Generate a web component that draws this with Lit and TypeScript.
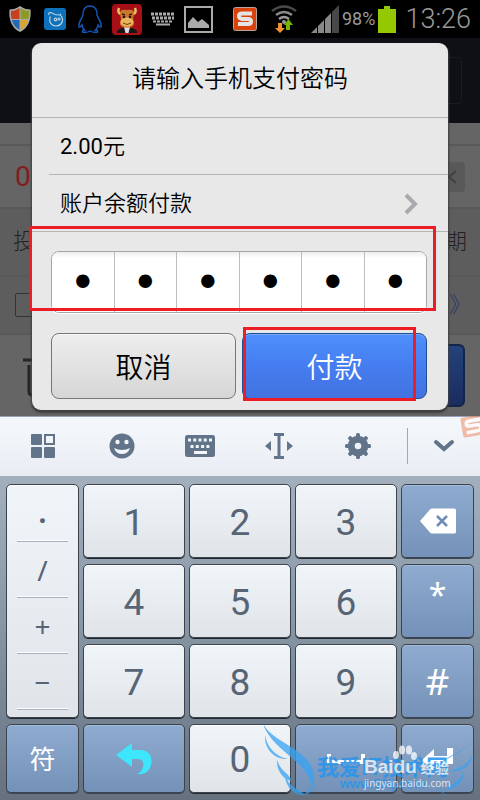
import { LitElement, html, css, svg } from "lit";
import { customElement } from "lit/decorators.js";
import { classMap } from "lit/directives/class-map.js";

@customElement("status-bar")
class StatusBar extends LitElement {
  static styles = css`
    :host {
      display: flex;
      justify-content: space-between;
      align-items: center;
      height: 38px;
      padding: 0 9px 0 7px;
      background: #000;
      color: #9a9a9a;
      font-family: Roboto, "Noto Sans", sans-serif;
    }
    .group { display: flex; align-items: center; gap: 9px; }
    .spread { gap: 14px; }
    .power { display: flex; align-items: center; gap: 3px; }
    .percent { font-size: 18px; line-height: 24px; }
    .time { font-size: 27px; line-height: 32px; font-weight: 300; }
    svg { display: block; }
  `;
  render() {
    return html`
      <div class="group">
        <svg width="26" height="28" viewBox="0 0 26 28">
          <path d="M13 1C10 3.500 6 4.500 2.500 4.500C1.500 13 4 23 13 27C22 23 24.500 13 23.500 4.500C20 4.500 16 3.500 13 1Z" fill="#aaa"/>
          <path d="M12.500 3C10 5 7 6 4 6Q3.500 10 4.500 14H12.500Z" fill="#c6401f"/>
          <path d="M13.500 3C16 5 19 6 22 6Q22.500 10 21.500 14H13.500Z" fill="#8c9b25"/>
          <path d="M4.800 15H12.500V25Q6.500 21.500 4.800 15Z" fill="#2467b5"/>
          <path d="M21.200 15H13.500V25Q19.500 21.500 21.200 15Z" fill="#dca52a"/>
        </svg>
        <svg width="26" height="26" viewBox="0 0 26 26">
          <rect x="2" y="2" width="22" height="22" rx="3" fill="#0d72bb"/>
          <g fill="none" stroke="#b8cfdf" stroke-width="1.200">
            <path d="M7 9C6 6 9 6 12 8Q16 10 19 8"/>
            <path d="M8.500 10.500C6 16 10 20 14 20C18 20 21 17 20.500 13Q20 10 18 9"/>
            <circle cx="13.500" cy="13.500" r="1.300"/><circle cx="17" cy="13" r="1"/>
          </g>
        </svg>
        <svg width="26" height="30" viewBox="0 0 26 30">
          <path d="M13 2C8 2 5.500 6 6 11C5.500 14 1 18 2 23C3 23.500 4 22 5 21Q5 24 7.500 26Q5 26 5.500 28Q10 29 13 27Q16 29 20.500 28Q21 26 18.500 26Q21 24 21 21C22 22 23 23.500 24 23C25 18 20.500 14 20 11C20.500 6 18 2 13 2Z" fill="#000" stroke="#1458b8" stroke-width="1.500"/>
        </svg>
        <svg width="30" height="31" viewBox="0 0 30 31">
          <rect width="30" height="31" rx="4" fill="#a70f17"/>
          <path d="M5 29V27Q9 23 15 24Q21 23 25 27V29Z" fill="#171717"/>
          <path d="M12 23H18L16.500 29H13.500Z" fill="#ddd"/>
          <path d="M7 4Q5 9 9 10M23 4Q25 9 21 10" stroke="#e6c267" stroke-width="2.500" fill="none"/>
          <path d="M8 9Q8 5 15 6Q22 5 22 9L21 16Q24 21 19 23Q15 24 11 23Q6 21 9 16Z" fill="#c9772c"/>
          <ellipse cx="15" cy="18" rx="6.500" ry="4.500" fill="#e8b55a"/>
          <path d="M11 19Q15 22 19 19" stroke="#7a3510" fill="none"/>
          <path d="M10 10L13 11M20 10L17 11" stroke="#401708" stroke-width="1.500"/>
          <circle cx="12" cy="13" r="1.300" fill="#211"/><circle cx="18" cy="13" r="1.300" fill="#211"/>
        </svg>
        <svg width="24" height="14" viewBox="0 0 24 14" stroke="#aaa" fill="none">
          <path d="M0 2H24" stroke-width="3" stroke-dasharray="3 1"/>
          <path d="M1 6H23" stroke-width="3" stroke-dasharray="3 1"/>
          <path d="M2 9.500H22" stroke-width="2" stroke-dasharray="3 1"/>
          <path d="M5 12.500H19" stroke-width="2"/>
        </svg>
        <svg width="29" height="27" viewBox="0 0 29 27">
          <rect x="1" y="1" width="27" height="25" fill="none" stroke="#aaa" stroke-width="2"/>
          <path d="M4 22V17L9 11L14 16L18 13L25 19V22Z" fill="#aaa"/>
        </svg>
      </div>
      <div class="group">
        <div class="power">
          <div class="group spread">
            <svg width="24" height="24" viewBox="0 0 24 24">
              <rect x=".5" y=".5" width="23" height="23" rx="2" fill="#d9420b" stroke="#b9a59a"/>
              <path d="M19 6.500H9Q6 6.500 6 9T9 12H15Q18 12 18 14.500T15 17H5" fill="none" stroke="#e4e4e4" stroke-width="4"/>
            </svg>
            <svg width="26" height="28" viewBox="0 0 26 28">
              <g fill="none" stroke-width="2.500">
                <path d="M1 6Q13 -3 25 6" stroke="#4a4a4a"/>
                <path d="M5 10Q13 4 21 10" stroke="#888"/>
                <path d="M8 14Q13 10 18 14" stroke="#999"/>
              </g>
              <circle cx="13" cy="17" r="2" fill="#999"/>
              <path d="M7 18H11V23H14L9 28L4 23H7Z" fill="#ef922c"/>
              <path d="M15 25H19V20H22L17.500 14L13 20H15Z" fill="#78b400"/>
            </svg>
            <svg width="28" height="28" viewBox="0 0 28 28">
              <path d="M0 28L6 22V28ZM7 21L13 15V28H7ZM14 14L20 8V28H14Z" fill="#888"/>
              <path d="M21 7L28 0V28H21Z" fill="#484848"/>
            </svg>
          </div>
          <span class="percent">98%</span>
          <svg width="18" height="27" viewBox="0 0 18 27"><path d="M6 0H12V3H18V27H0V3H6Z" fill="#94c800"/></svg>
        </div>
        <span class="time">13:26</span>
      </div>
    `;
  }
}

@customElement("order-page")
class OrderPage extends LitElement {
  static styles = css`
    :host {
      display: flex;
      flex-direction: column;
      min-width: 0;
      background: #656565;
      color: #222;
      font: 300 22px/32px Roboto, "Noto Sans CJK SC", sans-serif;
    }
    .row {
      display: flex;
      justify-content: space-between;
      align-items: center;
      box-sizing: border-box;
      padding: 0 13px;
      border-bottom: 2px solid #595959;
    }
    .head { height: 85px; background: #0f1015; border: 0; padding: 0 18px; }
    .head-button { margin-left: auto; width: 80px; height: 47px; border: 1px solid #1b1c22; border-radius: 4px; background: none; }
    .strip { height: 23px; }
    .amount { height: 63px; font-size: 28px; color: #801d1d; font-weight: 400; padding: 0 15px; }
    .times { height: 68px; background: #5d5d5d; }
    .agree { height: 58px; background: #5d5d5d; padding: 0 15px; }
    .foot { flex: 1; border: 0; padding: 0 15px 0 23px; }
    .clear { display: flex; align-items: center; justify-content: flex-end; width: 60px; height: 30px; padding: 0 7px; border: 0; border-radius: 4px; background: #595959; }
    .tick { appearance: none; width: 24px; height: 24px; margin: 0; border: 1px solid #333; border-radius: 2px; }
    .terms { color: #1f3864; text-decoration: none; margin-right: -6px; }
    .buy { width: 120px; height: 63px; border: 2px solid #122647; border-radius: 6px; background: linear-gradient(#24427a, #1b2c60); }
  `;
  render() {
    return html`
      <div class="row head"><button class="head-button" aria-label="菜单"></button></div>
      <div class="row strip"></div>
      <div class="row amount">
        <span>0</span>
        <button class="clear" aria-label="删除">
          <svg width="12" height="14" viewBox="0 0 12 14"><path d="M10 1L3 7L10 13" fill="none" stroke="#404040" stroke-width="2"/></svg>
        </button>
      </div>
      <div class="row times"><span>投</span><span>期</span></div>
      <div class="row agree">
        <input class="tick" type="checkbox" aria-label="同意" />
        <a class="terms" href="#">》</a>
      </div>
      <div class="row foot">
        <svg width="40" height="42" viewBox="0 0 40 42" fill="none" stroke="#252525" stroke-width="3">
          <path d="M0 5H40M6 10V37Q6 40 10 40H30Q34 40 34 36V10M14 4V1H26V4"/>
        </svg>
        <button class="buy" aria-label="购买"></button>
      </div>
    `;
  }
}

@customElement("pay-dialog")
class PayDialog extends LitElement {
  static styles = css`
    :host {
      position: relative;
      display: block;
      background: #e8e8e8;
      border-radius: 9px;
      box-shadow: 0 2px 2px 1px #404040;
      color: #000;
      font: 350 22px/32px Roboto, "Noto Sans CJK SC", sans-serif;
    }
    .title {
      margin: 0;
      box-sizing: border-box;
      height: 75px;
      padding: 20px 0 0;
      border-bottom: 1px solid #b5b5b5;
      font-size: 24px;
      font-weight: inherit;
      text-align: center;
    }
    .row {
      display: flex;
      align-items: center;
      justify-content: space-between;
      box-sizing: border-box;
      height: 57px;
      margin-left: 17px;
      padding: 2px 30px 0 11px;
      border-bottom: 1px solid #b5b5b5;
    }
    .price { font-weight: 400; }
    .last { margin-left: 0; padding-left: 28px; }
    .form { padding: 19px 21px 11px 19px; }
    .pin {
      display: flex;
      box-sizing: border-box;
      height: 62px;
      margin: 0 0 20px;
      padding: 0;
      border: 1px solid #a5a5a5;
      border-radius: 8px;
      overflow: hidden;
      background: #fff;
      box-shadow: 0 1px 0 #fff;
    }
    .digit {
      flex: 1;
      min-width: 0;
      width: 0;
      padding: 2px 0 0;
      border: 0;
      border-radius: 0;
      outline: 0;
      background: linear-gradient(#eee, #fff 6px);
      color: #000;
      font: 46px/58px "DejaVu Sans", sans-serif;
      text-align: center;
    }
    .digit + .digit { border-left: 1px solid #bdbdbd; }
    .actions { display: flex; gap: 6px; }
    .action {
      flex: 1;
      height: 66px;
      padding: 6px 0 0;
      border: 1px solid #777;
      border-radius: 8px;
      background: linear-gradient(#ededed, #e2e2e2 50%, #d6d6d6);
      box-shadow: inset 0 1px 0 #f8f8f8;
      color: #000;
      font: inherit;
      font-size: 28px;
    }
    .primary {
      border-color: #1a4f94;
      background: linear-gradient(#4f8ffc, #457df0 50%, #4272e0);
      box-shadow: inset 0 1px 0 #78aaff;
      color: #fff;
    }
    .mark { position: absolute; box-sizing: border-box; border: 3px solid #ee1c24; pointer-events: none; }
    .mark-pin { left: -3px; right: 12px; top: 183px; height: 85px; }
    .mark-pay { left: calc(50% + 3px); right: 32px; top: 284px; height: 74px; }
  `;
  render() {
    return html`
      <h1 class="title">请输入手机支付密码</h1>
      <div class="row"><span><span class="price">2.00</span>元</span></div>
      <div class="row last">
        <span>账户余额付款</span>
        <svg width="14" height="22" viewBox="0 0 14 22"><path d="M2 2L11 11L2 20" fill="none" stroke="#aaaaae" stroke-width="4"/></svg>
      </div>
      <form class="form" @submit=${(e: Event) => e.preventDefault()}>
        <div class="pin" role="group" aria-label="支付密码">
          ${[1, 2, 3, 4, 5, 6].map((n) => html`<input class="digit" type="password" maxlength="1" value="0" aria-label="第${n}位" />`)}
        </div>
        <div class="actions">
          <button class="action" type="button">取消</button>
          <button class="action primary" type="submit">付款</button>
        </div>
      </form>
      <div class="mark mark-pin"></div>
      <div class="mark mark-pay"></div>
    `;
  }
}

const gearTeeth = [0, 45, 90, 135, 180, 225, 270, 315];

@customElement("soft-keyboard")
class SoftKeyboard extends LitElement {
  static styles = css`
    :host {
      position: relative;
      display: flex;
      flex-direction: column;
      overflow: hidden;
      font-family: Roboto, "Noto Sans CJK SC", sans-serif;
    }
    button { margin: 0; padding: 0; border: 0; background: none; font: inherit; color: inherit; display: flex; align-items: center; justify-content: center; }
    svg { display: block; }
    .tools {
      display: flex;
      align-items: center;
      box-sizing: border-box;
      height: 60px;
      padding: 0 0 2px 4px;
      border-top: 1px solid #98a2b8;
      background: linear-gradient(#f5f8fb, #e9ecf3);
      color: #62748a;
    }
    .tool { flex: 1; height: 56px; }
    .divider { width: 1px; height: 36px; margin-left: 10px; background: #9dabb8; }
    .fold { width: 72px; height: 56px; }
    .keys {
      display: grid;
      grid-template-columns: 73fr 102fr 102fr 102fr 73fr;
      grid-template-rows: repeat(3, 74px) 69px;
      gap: 6px 4px;
      padding: 8px 6px 7px;
      background: linear-gradient(#a3afbd, #8797a6 45%, #667180);
    }
    .key, .column {
      box-sizing: border-box;
      min-width: 0;
      border: 1px solid #3c434c;
      border-radius: 5px;
      background: linear-gradient(#f0f5f9, #e0e4e8);
      box-shadow: inset 0 1px 0 #fff, 0 1px 0 #22272d;
      color: #566475;
      font-size: 37px;
      line-height: 44px;
    }
    .key { padding-top: 3px; }
    .dark {
      background: linear-gradient(#8fabd0, #7491b7);
      box-shadow: inset 0 1px 0 #a2bad9, 0 1px 0 #3c4656;
      color: #fff;
    }
    .small { font-size: 26px; }
    .symbol { padding: 0; font-family: "Noto Sans", sans-serif; }
    .star { padding-bottom: 12px; font-size: 32px; }
    .column { grid-row: span 3; display: flex; flex-direction: column; padding: 1px 10px 0; }
    .operator { box-sizing: border-box; height: 56px; border-bottom: 1px solid #a6b0bf; box-shadow: inset 0 -1px 0 #fff; font: 28px/32px "Noto Sans", sans-serif; }
    .point { padding-top: 12px; font-weight: 700; }
    .corner { position: absolute; top: 0; right: -6px; opacity: 0.5; }
    .wings { position: absolute; right: 0; bottom: 0; opacity: 0.75; pointer-events: none; }
    .site { position: absolute; right: 32px; bottom: 9px; text-align: center; color: #2c95ea; opacity: 0.9; white-space: nowrap; pointer-events: none; }
    .site-name { font: 700 22px/24px "Noto Sans CJK SC", sans-serif; }
    .site-url { font: 700 13px/14px "Liberation Sans", sans-serif; }
    .credit { position: absolute; right: 28px; bottom: 11px; width: 88px; color: #fff; opacity: 0.75; white-space: nowrap; pointer-events: none; }
    .credit-name { display: flex; align-items: center; gap: 4px; font: 700 19px/20px "Liberation Sans", sans-serif; }
    .credit-tag { font: 700 14px/20px "Noto Sans CJK SC", sans-serif; }
    .credit-url { font: 10px/12px "Noto Sans", sans-serif; }
    .paw { position: absolute; left: 28px; top: -12px; }
  `;

  private toolIcons = [
    { label: "面板", icon: svg`<rect x="1" y="1" width="11" height="11" rx="1" fill="currentColor"/><rect x="15" y="2" width="9" height="9" fill="none" stroke="currentColor" stroke-width="2"/><rect x="1" y="14" width="11" height="11" rx="1" fill="currentColor"/><rect x="14" y="14" width="11" height="11" rx="1" fill="currentColor"/>`, w: 26, h: 26 },
    { label: "表情", icon: svg`<circle cx="13" cy="13" r="12.500" fill="currentColor"/><circle cx="8.500" cy="9" r="2.200" fill="#f2f5f9"/><circle cx="17.500" cy="9" r="2.200" fill="#f2f5f9"/><path d="M5 15Q13 19 21 15Q19 21 13 21T5 15Z" fill="#f2f5f9"/>`, w: 26, h: 26 },
    { label: "键盘", icon: svg`<rect width="30" height="22" rx="2.500" fill="currentColor"/><path d="M3 5H28" stroke="#f2f5f9" stroke-width="3" stroke-dasharray="3 2.250"/><path d="M5.500 11.500H25" stroke="#f2f5f9" stroke-width="3" stroke-dasharray="3 2.300"/><path d="M9 17.500H22" stroke="#f2f5f9" stroke-width="3"/>`, w: 30, h: 22 },
    { label: "光标", icon: svg`<path d="M9 1.500H19M9 24.500H19M14 1V25" stroke="currentColor" stroke-width="3"/><path d="M6 8V18L0 13ZM22 8V18L28 13Z" fill="currentColor"/>`, w: 28, h: 26 },
    { label: "设置", icon: svg`<circle cx="13" cy="13" r="6.800" fill="none" stroke="currentColor" stroke-width="7"/>${gearTeeth.map((a) => svg`<rect x="11" y="0" width="4" height="5" rx="1.500" fill="currentColor" transform="rotate(${a} 13 13)"/>`)}`, w: 26, h: 26 },
  ];

  private key(label: unknown, kind = "", name?: string) {
    return html`<button class=${classMap({ key: true, dark: kind !== "", small: kind === "small", symbol: kind === "symbol" || kind === "icon", star: label === "*" })} aria-label=${name ?? String(label)}>${label}</button>`;
  }

  render() {
    const erase = html`<svg width="36" height="26" viewBox="0 0 36 26"><path d="M0 13L10 1.500Q11 .5 12 .5H34Q36 .5 36 2V24Q36 25.500 34 25.500H12Q11 25.500 10 24.500Z" fill="#fff"/><path d="M17 8L27 18M27 8L17 18" stroke="#6f8cb4" stroke-width="2.500"/></svg>`;
    const back = html`<svg width="38" height="32" viewBox="0 0 38 32"><path d="M1 12L17 0V7H25C34 7 38 14 36 22C34 29 29 32 22 31C29 28 31 17 24 16H17V24Z" fill="#3ee6fb"/></svg>`;
    const space = html`<svg width="38" height="12" viewBox="0 0 38 12"><path d="M2 1V9H36V1" fill="none" stroke="#fff" stroke-width="4"/></svg>`;
    const enter = html`<svg width="32" height="24" viewBox="0 0 32 24"><path d="M0 13L12 2V9H25V1H31V17H12V24Z" fill="#fff"/></svg>`;
    return html`
      <div class="tools">
        ${this.toolIcons.map((t) => html`<button class="tool" aria-label=${t.label}><svg width=${t.w} height=${t.h} viewBox="0 0 ${t.w} ${t.h}">${t.icon}</svg></button>`)}
        <span class="divider"></span>
        <button class="fold" aria-label="收起"><svg width="22" height="14" viewBox="0 0 22 14"><path d="M3 3L11 10L19 3" fill="none" stroke="currentColor" stroke-width="4" stroke-linecap="round"/></svg></button>
      </div>
      <div class="keys">
        <div class="column">
          ${["·", "/", "+", "−"].map((c) => html`<button class=${classMap({ operator: true, point: c === "·" })}>${c}</button>`)}
        </div>
        ${["1", "2", "3"].map((n) => this.key(n))}${this.key(erase, "icon", "退格")}
        ${["4", "5", "6"].map((n) => this.key(n))}${this.key("*", "symbol")}
        ${["7", "8", "9"].map((n) => this.key(n))}${this.key("#", "symbol")}
        ${this.key("符", "small")}${this.key(back, "icon", "返回")}${this.key("0")}${this.key(space, "icon", "空格")}${this.key(enter, "icon", "回车")}
      </div>
      <svg class="corner" width="26" height="24" viewBox="0 0 26 24">
        <g transform="rotate(-10 13 12)"><rect x="2" y="0" width="24" height="20" rx="2" fill="#ef8158"/><path d="M22 4.500H11Q7 4.500 7 7T11 9.500H17Q21 9.500 21 12.500T17 15.500H6" fill="none" stroke="#fff" stroke-width="3.500"/></g>
      </svg>
      <svg class="wings" width="218" height="80" viewBox="0 0 218 80" fill="#36a3f2">
        <path d="M1 3C10 24 50 28 52 57C53 67 49 74 42 75L49 68C50 43 8 30 1 3Z"/>
        <path d="M3 15C6 31 17 37 26 39C16 40 2 32 3 15ZM15 40C19 52 27 53 30 61C23 61 14 51 15 40ZM23 55C27 67 35 68 43 75C33 76 23 67 23 55Z"/>
        <path d="M212 20C204 33 171 37 172 58C172 66 177 72 184 75L175 68C160 41 202 36 212 20Z"/>
        <path d="M210 34C207 45 197 49 187 51C199 53 211 45 210 34ZM201 52C199 61 189 64 183 70C193 69 202 63 201 52Z"/>
      </svg>
      <div class="site"><div class="site-name">我爱IT技术网</div><div class="site-url">www.52ij.com</div></div>
      <div class="credit">
        <svg class="paw" width="26" height="24" viewBox="0 0 26 24" fill="#fff"><ellipse cx="4" cy="10" rx="3" ry="4"/><ellipse cx="10" cy="5" rx="3" ry="4.500"/><ellipse cx="17" cy="5" rx="3" ry="4.500"/><ellipse cx="22" cy="11" rx="3" ry="4"/></svg>
        <div class="credit-name"><span>Baidu</span><span class="credit-tag">经验</span></div>
        <div class="credit-url">jingyan.baidu.com</div>
      </div>
    `;
  }
}

@customElement("app-root")
class AppRoot extends LitElement {
  static styles = css`
    :host { display: block; background: #000; }
    .stage { display: grid; overflow: hidden; }
    .under, .over { grid-area: 1 / 1; }
    .over { position: relative; padding: 5px 32px 6px; }
  `;
  render() {
    return html`
      <status-bar></status-bar>
      <div class="stage">
        <order-page class="under"></order-page>
        <div class="over"><pay-dialog></pay-dialog></div>
      </div>
      <soft-keyboard></soft-keyboard>
    `;
  }
}
